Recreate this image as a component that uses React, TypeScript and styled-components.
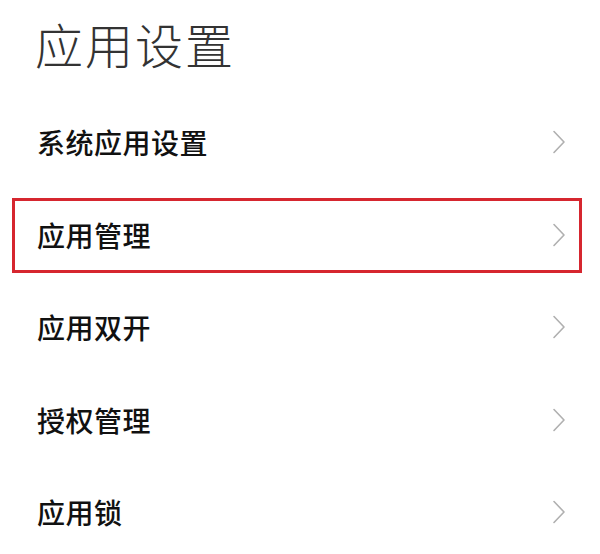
import styled, { createGlobalStyle } from 'styled-components';

const GlobalStyle = createGlobalStyle`
  html, body {
    margin: 0;
    padding: 0;
    background: #ffffff;
  }
  body {
    font-family: "Noto Sans CJK SC", "Noto Sans", sans-serif;
  }
`;

const items = [
  { label: '系统应用设置' },
  { label: '应用管理', highlighted: true },
  { label: '应用双开' },
  { label: '授权管理' },
  { label: '应用锁' },
];

const Chevron = () => (
  <svg width="14" height="24" viewBox="0 0 14 24" fill="none">
    <path d="M2 1.5 L12 12 L2 22.5" stroke="#b0b0b0" strokeWidth="1.6" strokeLinecap="round" strokeLinejoin="round" />
  </svg>
);

const App = () => {
  return (
    <Page>
      <GlobalStyle />
      <Header>
        <Title>应用设置</Title>
      </Header>
      <List>
        {items.map((item) => (
          <Row key={item.label} $highlighted={item.highlighted}>
            <Label>{item.label}</Label>
            <Chevron />
          </Row>
        ))}
      </List>
    </Page>
  );
};

export default App;

const Page = styled.div`
  width: 600px;
  height: 554px;
  overflow: hidden;
  background: #fff;
  display: flex;
  flex-direction: column;
`;

const Header = styled.div`
  height: 96px;
  flex-shrink: 0;
  display: flex;
  align-items: center;
  padding: 0 0 10px 35px;
  box-sizing: border-box;
`;

const Title = styled.h1`
  margin: 0;
  font-size: 48px;
  font-weight: 300;
  color: #333;
  letter-spacing: 2px;
  line-height: 1;
`;

const List = styled.div`
  display: flex;
  flex-direction: column;
`;

const Row = styled.div<{ $highlighted?: boolean }>`
  position: relative;
  height: 92.5px;
  flex-shrink: 0;
  display: flex;
  align-items: center;
  justify-content: space-between;
  padding: 0 34px 0 37px;

  ${({ $highlighted }) =>
    $highlighted &&
    `
    &::after {
      content: '';
      position: absolute;
      left: 12px;
      right: 18px;
      top: 9px;
      bottom: 8px;
      border: 3px solid #d6262f;
      pointer-events: none;
    }
  `}
`;

const Label = styled.span`
  font-size: 28px;
  font-weight: 500;
  color: #111;
  letter-spacing: 0.5px;
`;
